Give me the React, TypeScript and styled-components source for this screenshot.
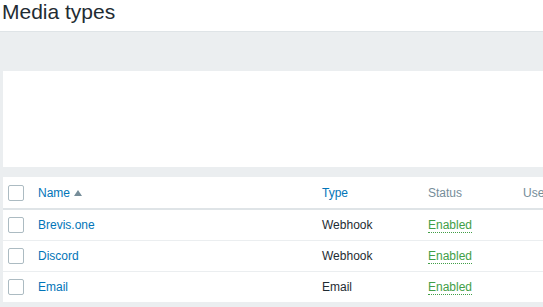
import React from 'react';
import styled, { createGlobalStyle } from 'styled-components';

const GlobalStyle = createGlobalStyle`
  html, body {
    margin: 0;
    padding: 0;
    background: #ffffff;
    font-family: 'Liberation Sans', Arial, sans-serif;
    overflow: hidden;
  }
`;

const Page = styled.div`
  width: 543px;
  height: 307px;
  overflow: hidden;
`;

const Header = styled.header`
  height: 31px;
  padding: 1px 0 0 2px;
  box-sizing: border-box;

  h1 {
    margin: 0;
    font-size: 21px;
    font-weight: 400;
    line-height: 22px;
    color: #1f2c33;
  }
`;

const Main = styled.main`
  background-color: #ebeef0;
  border-top: 1px solid #dfe4e7;
  padding: 39px 0 0 3px;
  min-height: 300px;
`;

const FilterBox = styled.div`
  background-color: #ffffff;
  width: 700px;
  height: 96px;
  margin-bottom: 10px;
`;

const Table = styled.table`
  width: 700px;
  background-color: #ffffff;
  border-collapse: collapse;
  table-layout: fixed;
  font-size: 12px;
  color: #1f2c33;

  th,
  td {
    padding: 0 5px;
    text-align: left;
    white-space: nowrap;
  }

  th {
    height: 31px;
    font-weight: 400;
    color: #768d99;
    border-bottom: 2px solid #dfe4e7;
  }

  td {
    height: 30px;
    border-bottom: 1px solid #ebeef0;
  }
`;

const Checkbox = styled.span`
  display: block;
  width: 16px;
  height: 16px;
  box-sizing: border-box;
  border: 1px solid #acbbc2;
  border-radius: 2px;
  background: #ffffff;
`;

const Link = styled.a<{ $status?: boolean }>`
  color: ${(p) => (p.$status ? '#429e47' : '#0275b8')};
  text-decoration: none;
  border-bottom: ${(p) => (p.$status ? '1px dotted #429e47' : 'none')};
  cursor: pointer;
`;

const SortArrow = styled.span`
  display: inline-block;
  margin-left: 4px;
  width: 0;
  height: 0;
  border-left: 4px solid transparent;
  border-right: 4px solid transparent;
  border-bottom: 6px solid #768d99;
  vertical-align: 1px;
`;

interface MediaType {
  name: string;
  type: string;
  status: string;
}

const mediaTypes: MediaType[] = [
  { name: 'Brevis.one', type: 'Webhook', status: 'Enabled' },
  { name: 'Discord', type: 'Webhook', status: 'Enabled' },
  { name: 'Email', type: 'Email', status: 'Enabled' },
];

const App: React.FC = () => {
  return (
    <Page>
      <GlobalStyle />
      <Header>
        <h1>Media types</h1>
      </Header>
      <Main>
        <FilterBox />
        <Table>
          <colgroup>
            <col style={{ width: 30 }} />
            <col style={{ width: 284 }} />
            <col style={{ width: 106 }} />
            <col style={{ width: 95 }} />
            <col />
          </colgroup>
          <thead>
            <tr>
              <th>
                <Checkbox />
              </th>
              <th>
                <Link>Name</Link>
                <SortArrow />
              </th>
              <th>
                <Link>Type</Link>
              </th>
              <th>Status</th>
              <th>Used in actions</th>
            </tr>
          </thead>
          <tbody>
            {mediaTypes.map((m) => (
              <tr key={m.name}>
                <td>
                  <Checkbox />
                </td>
                <td>
                  <Link>{m.name}</Link>
                </td>
                <td>{m.type}</td>
                <td>
                  <Link $status>{m.status}</Link>
                </td>
                <td />
              </tr>
            ))}
          </tbody>
        </Table>
      </Main>
    </Page>
  );
};

export default App;
